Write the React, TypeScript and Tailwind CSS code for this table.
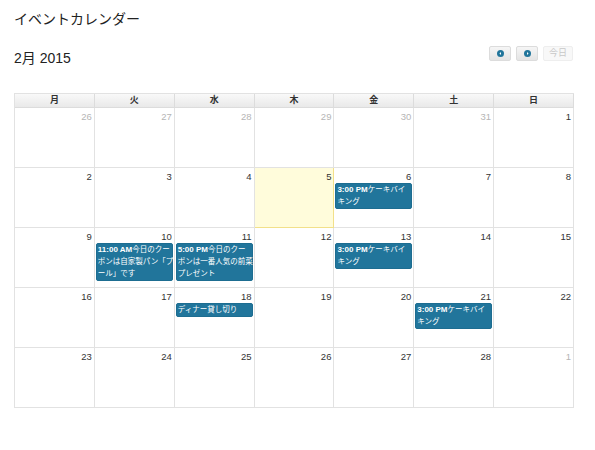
import type { ReactNode } from "react";

type CalEvent = { time?: string; lines: string[] };

type Day = {
  n: number;
  other?: boolean;
  today?: boolean;
  events?: CalEvent[];
};

const WEEKDAYS = ["月", "火", "水", "木", "金", "土", "日"];

const cake: CalEvent = { time: "3:00 PM", lines: ["ケーキバイ", "キング"] };

const WEEKS: Day[][] = [
  [
    { n: 26, other: true },
    { n: 27, other: true },
    { n: 28, other: true },
    { n: 29, other: true },
    { n: 30, other: true },
    { n: 31, other: true },
    { n: 1 },
  ],
  [
    { n: 2 },
    { n: 3 },
    { n: 4 },
    { n: 5, today: true },
    { n: 6, events: [cake] },
    { n: 7 },
    { n: 8 },
  ],
  [
    { n: 9 },
    {
      n: 10,
      events: [{ time: "11:00 AM", lines: ["今日のクー", "ポンは自家製パン「プ", "ール」です"] }],
    },
    {
      n: 11,
      events: [{ time: "5:00 PM", lines: ["今日のクー", "ポンは一番人気の前菜", "プレゼント"] }],
    },
    { n: 12 },
    { n: 13, events: [cake] },
    { n: 14 },
    { n: 15 },
  ],
  [
    { n: 16 },
    { n: 17 },
    { n: 18, events: [{ lines: ["ディナー貸し切り"] }] },
    { n: 19 },
    { n: 20 },
    { n: 21, events: [cake] },
    { n: 22 },
  ],
  [
    { n: 23 },
    { n: 24 },
    { n: 25 },
    { n: 26 },
    { n: 27 },
    { n: 28 },
    { n: 1, other: true },
  ],
];

function NavButton({ children, disabled }: { children: ReactNode; disabled?: boolean }) {
  return (
    <button
      type="button"
      disabled={disabled}
      className={
        disabled
          ? "flex h-[15px] w-[30px] items-center justify-center rounded-[2px] border border-[#eeeeee] bg-[#f8f8f8] text-[9px] leading-none text-[#c8c8c8]"
          : "flex h-[15px] w-[22px] items-center justify-center rounded-[2px] border border-[#dcdcdc] bg-gradient-to-b from-[#f6f6f6] to-[#e4e4e4]"
      }
    >
      {children}
    </button>
  );
}

function ArrowDot({ dir }: { dir: "left" | "right" }) {
  return (
    <svg width="7" height="7" viewBox="0 0 8 8">
      <circle cx="4" cy="4" r="4" fill="#21759b" />
      {dir === "left" ? (
        <path d="M4.6 2.3 L2.8 4 L4.6 5.7 Z" fill="#fff" />
      ) : (
        <path d="M3.4 2.3 L5.2 4 L3.4 5.7 Z" fill="#fff" />
      )}
    </svg>
  );
}

function EventChip({ ev }: { ev: CalEvent }) {
  return (
    <div className="mx-[1px] rounded-[2px] border border-[#1d6d91] bg-[#21759b] px-[1px] text-[7.5px] leading-[12px] whitespace-nowrap text-white">
      {ev.lines.map((line, i) => (
        <div key={i}>
          {i === 0 && ev.time && <span className="text-[8px] font-bold">{ev.time}</span>}
          {line}
        </div>
      ))}
    </div>
  );
}

function DayCell({ day }: { day: Day }) {
  return (
    <div
      className={
        day.today
          ? "h-[60px] border-r border-b border-[#f2e08a] bg-[#fffcdb] pt-[3px]"
          : "h-[60px] border-r border-b border-[#e2e2e2] bg-white pt-[3px]"
      }
    >
      <div
        className={
          day.other
            ? "pr-[2px] text-right text-[9.5px] leading-[12px] text-[#b5b5b5]"
            : "pr-[2px] text-right text-[9.5px] leading-[12px] text-[#333333]"
        }
      >
        {day.n}
      </div>
      <div className="flex flex-col gap-[1px]">
        {day.events?.map((ev, i) => (
          <EventChip key={i} ev={ev} />
        ))}
      </div>
    </div>
  );
}

export default function App() {
  return (
    <div
      className="min-h-[450px] w-[595px] bg-white px-[14px] pt-[9px] text-[#222222]"
      style={{ fontFamily: '"Liberation Sans", "Noto Sans CJK JP", sans-serif' }}
    >
      <h1 className="text-[14px] leading-[20px]">イベントカレンダー</h1>

      <div className="mt-[19px] flex w-[560px] items-start justify-between">
        <h2 className="text-[14px] leading-[20px]">2月 2015</h2>
        <div className="-mt-[2px] flex gap-[5px] pr-[1px]">
          <NavButton>
            <ArrowDot dir="left" />
          </NavButton>
          <NavButton>
            <ArrowDot dir="right" />
          </NavButton>
          <NavButton disabled>今日</NavButton>
        </div>
      </div>

      <div className="mt-[25px] w-[560px] border-t border-l border-[#e2e2e2]">
        <div className="grid grid-cols-7">
          {WEEKDAYS.map((w) => (
            <div
              key={w}
              className="h-[14px] border-r border-b border-[#dcdcdc] bg-gradient-to-b from-[#f9f9f9] to-[#e9e9e9] text-center text-[9px] font-bold leading-[13px] text-[#333333]"
            >
              {w}
            </div>
          ))}
        </div>
        {WEEKS.map((week, wi) => (
          <div key={wi} className="grid grid-cols-7">
            {week.map((day, di) => (
              <DayCell key={di} day={day} />
            ))}
          </div>
        ))}
      </div>
    </div>
  );
}
